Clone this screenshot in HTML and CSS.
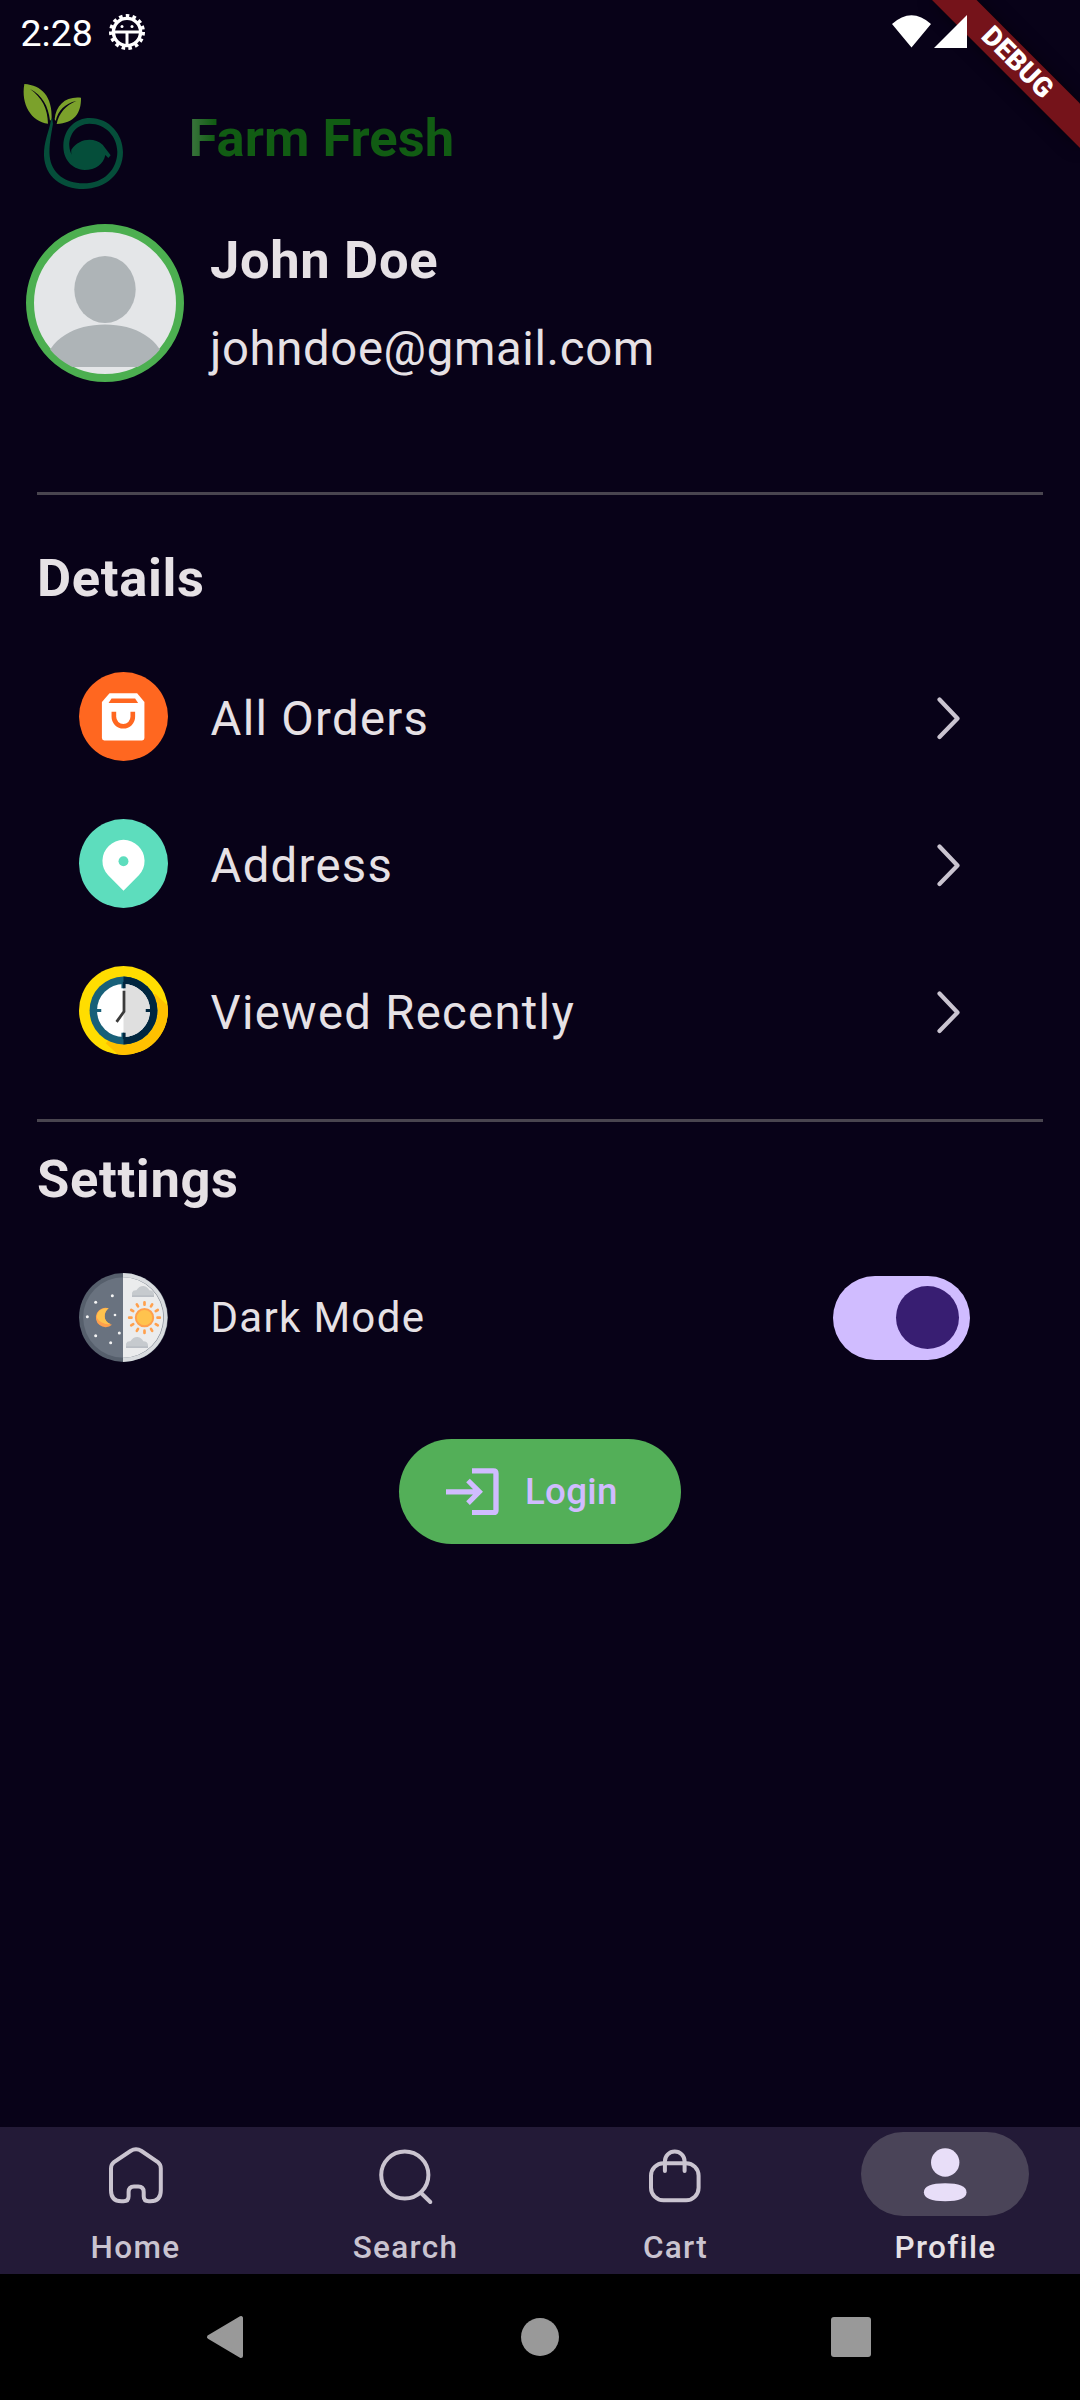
FILE: index.html
```html
<!DOCTYPE html>
<html lang="en">
<head>
<meta charset="utf-8">
<title>Farm Fresh</title>
<link rel="stylesheet" href="styles.css">
</head>
<body>
<div class="phone">
  <svg class="debug-banner" width="200" height="200" viewBox="880 0 200 200">
    <path class="banner-shadow" d="M932 0H976.6L1080 103.4V148Z"/>
    <path d="M932 0H976.6L1080 103.4V148Z" fill="#75131a"/>
    <text class="banner-text" transform="translate(1017.5 62.2) rotate(45)" text-anchor="middle" y="9">DEBUG</text>
  </svg>
  <header class="status-bar">
    <span class="clock">2:28</span>
    <svg class="bug" width="38" height="38" viewBox="-19 -19 38 38">
      <circle r="13.6" fill="none" stroke="#fff" stroke-width="3.4"/>
      <circle r="16" fill="none" stroke="#fff" stroke-width="4" stroke-dasharray="3.5 3.2"/>
      <path d="M-12 0H12M0 0V13" stroke="#fff" stroke-width="3"/>
      <circle cx="-5" cy="-5.5" r="1.5" fill="#fff"/><circle cx="5" cy="-5.5" r="1.5" fill="#fff"/>
    </svg>
    <svg class="signals" width="76" height="34" viewBox="892 14 76 34">
      <path fill="#fff" d="M892 23Q911.500 5.500 931 23L911.500 46.500ZM967 14V47H934Z"/>
    </svg>
  </header>

  <div class="app-bar">
    <svg class="logo" width="106.67" height="113.33" viewBox="60 240 320 340">
      <path fill="#7ba12b" d="M73 252C125 255 158 290 155 358L150 362C145 318 127 286 90 267C126 293 143 325 144 371C94 366 62 312 73 252Z"/>
      <path fill="#7ba12b" d="M243 293C244 340 222 369 170 372C176 341 198 315 229 303C195 310 174 332 167 363L164 358C168 314 198 288 243 293Z"/>
      <path fill="#054e3a" d="M156 352L159 372C152 410 147 438 149 468C154 520 196 550 250 550C313 550 352 507 352 455C351 410 318 371 268 371C230 372 207 402 208 438C209 456 218 473 231 487C218 476 212 464 214 449C238 414 282 411 308 434L332 466L325 474L316 465C311 493 286 510 254 510C213 508 189 476 190 436C192 386 226 354 270 354C328 354 369 403 369 457C369 521 317 567 250 567C185 567 134 529 132 467C131 425 146 397 152 365Z"/>
    </svg>
    <h1 class="brand">Farm Fresh</h1>
  </div>

  <main class="content">
    <section class="user">
      <svg class="avatar" width="158" height="158" viewBox="-79 -79 158 158">
        <defs><clipPath id="face"><circle r="72"/></clipPath></defs>
        <circle r="75" fill="#e4e6e8" stroke="#4caf50" stroke-width="8"/>
        <g clip-path="url(#face)" fill="#aeb4b7">
          <ellipse cx="0" cy="-13.500" rx="30.700" ry="33.500"/>
          <path d="M-62 64C-56 35 -30 21.500 0 21.500S56 35 62 64Z"/>
        </g>
      </svg>
      <div class="user-text">
        <p class="user-name">John Doe</p>
        <p class="user-mail">johndoe@gmail.com</p>
      </div>
    </section>

    <hr class="divider">

    <section class="details">
      <h2 class="heading">Details</h2>
      <div class="row">
        <svg class="row-icon" viewBox="237 605 268 268">
          <circle cx="371" cy="739" r="134" fill="#ff6720"/>
          <path fill="#fff" d="M329 669H412L434 695V804Q434 811 427 811H313Q306 811 306 804V695Z"/>
          <path fill="#ff6720" d="M335 685H406L415 698H326Z"/>
          <path d="M342 725V740A28 28 0 0 0 399 740V725" fill="none" stroke="#ff6720" stroke-width="14"/>
        </svg>
        <span class="row-label">All Orders</span>
        <svg class="chevron" width="24" height="43" viewBox="0 0 24 43"><path d="M2.500 2.500L20.500 21.500L2.500 40"/></svg>
      </div>
      <div class="row">
        <svg class="row-icon" viewBox="-45 -45 90 90">
          <circle r="45" fill="#5dddbd"/>
          <path fill="#fff" d="M0 27.500L-15.500 12A21.300 21.300 0 1 1 15.500 12Z"/>
          <circle cy="-2.300" r="5" fill="#5dddbd"/>
        </svg>
        <span class="row-label">Address</span>
        <svg class="chevron" width="24" height="43" viewBox="0 0 24 43"><path d="M2.500 2.500L20.500 21.500L2.500 40"/></svg>
      </div>
      <div class="row">
        <svg class="row-icon" viewBox="-45 -45 90 90">
          <defs><clipPath id="disc"><circle r="45"/></clipPath></defs>
          <circle r="45" fill="#ffdd00"/>
          <path clip-path="url(#disc)" fill="#ffc000" d="M32 -17L46 -4V46H-4L-18 33Z"/>
          <circle r="34.300" fill="#186079"/>
          <path d="M0 -34.300A34.300 34.300 0 0 1 0 34.300Z" fill="#00263f"/>
          <circle r="26.800" fill="#fff"/>
          <path d="M0 -26.800A26.800 26.800 0 0 1 0 26.800Z" fill="#dfdfdf"/>
          <path d="M-27.500 0H-22.500M-.7 -29V-22.500M-.7 22.500V29" stroke="#186079" stroke-width="2.800"/>
          <path d="M22.500 0H27.500M.7 -29V-22.500M.7 22.500V29" stroke="#00263f" stroke-width="2.800"/>
          <path d="M.5 -20V1L-7 11.500" fill="none" stroke="#3b3b3b" stroke-width="2.800"/>
        </svg>
        <span class="row-label">Viewed Recently</span>
        <svg class="chevron" width="24" height="43" viewBox="0 0 24 43"><path d="M2.500 2.500L20.500 21.500L2.500 40"/></svg>
      </div>
    </section>

    <hr class="divider">

    <section class="settings">
      <h2 class="heading">Settings</h2>
      <div class="row">
        <svg class="row-icon" viewBox="177 519 267 267">
          <circle cx="310.500" cy="652.500" r="133.500" fill="#565f6c"/>
          <path d="M309 519A133.500 133.500 0 0 1 309 786Z" fill="#d9dcdf"/>
          <circle cx="310.500" cy="652.500" r="121" fill="#69727f"/>
          <path d="M309 531.500A121 121 0 0 1 309 773.500Z" fill="#ebeced"/>
          <path d="M266 625A29 29 0 1 0 276 674C249 670 249 637 266 625Z" fill="#ffa04d"/>
          <path d="M266 625C240 623 229 638 231 654C240 668 254 674 272 672C249 665 249 637 266 625Z" fill="#ffc34e"/>
          <g fill="#f5f5f5"><circle cx="277" cy="587" r="4.500"/><circle cx="227" cy="607" r="4.500"/><circle cx="202" cy="650" r="4.500"/><circle cx="285" cy="645" r="4"/><circle cx="298" cy="699" r="4.500"/><circle cx="227" cy="707" r="4.500"/><circle cx="272" cy="728" r="4.500"/></g>
          <g fill="#c6cace"><path d="M336 590V578Q339 570 349 571Q358 557 371 558Q383 560 388 571Q401 572 402 582V590Z"/><path d="M318 743V731Q321 723 331 724Q340 710 353 711Q365 713 370 724Q383 725 384 735V743Z"/></g>
          <path d="M336 588.500H402M318 741.500H384" stroke="#b2b7be" stroke-width="4"/>
          <g transform="translate(373.500 653)">
            <circle r="26" fill="#ffc34e" stroke="#ffa04d" stroke-width="6"/>
            <g stroke="#ffa04d" stroke-width="8" stroke-linecap="round">
              <path d="M0 -46V-39M0 39V46M-46 0H-39M39 0H46"/>
              <path transform="rotate(30)" d="M0 -46V-39M0 39V46M-46 0H-39M39 0H46"/>
              <path transform="rotate(60)" d="M0 -46V-39M0 39V46M-46 0H-39M39 0H46"/>
            </g>
          </g>
        </svg>
        <span class="row-label small">Dark Mode</span>
        <span class="switch"><span class="thumb"></span></span>
      </div>
      <button class="login">
        <svg width="52.67" height="47.33" viewBox="199 143 158 142">
          <path d="M277 151.500H341Q349 151.500 349 159.500V269Q349 277 341 277H277" fill="none" stroke="#d0bcff" stroke-width="16"/>
          <path d="M199 214.500H297M265 180.500L299 214.500L265 248.500" fill="none" stroke="#d0bcff" stroke-width="15.500"/>
        </svg>
        <span class="login-label">Login</span>
      </button>
    </section>
  </main>

  <nav class="tabs">
    <div class="tab">
      <span class="pill"><svg class="tab-icon" viewBox="0 0 63 63"><path d="M24.600 52.500V49Q24.600 43.500 30 43.500H34.300Q39.700 43.500 39.700 49V53.200Q39.700 58.200 44.700 58.200H46.500Q56.800 58.200 56.800 47.500V25.500Q56.800 21.500 53.800 19L37.500 8Q32 4.400 26.500 8L10 19Q7 21.500 7 25.500V47.500Q7 58.200 17.300 58.200H19.600Q24.600 58.200 24.600 53.200Z"/></svg></span>
      <span class="tab-label">Home</span>
    </div>
    <div class="tab">
      <span class="pill"><svg class="tab-icon" viewBox="0 0 63 63"><circle cx="30.800" cy="32" r="23.600"/><path d="M47.300 50.200L56.300 59"/></svg></span>
      <span class="tab-label">Search</span>
    </div>
    <div class="tab">
      <span class="pill"><svg class="tab-icon" viewBox="0 0 63 63"><rect x="7" y="20.200" width="47.600" height="37.100" rx="12.500"/><path d="M20.900 28V18.300A9.850 9.850 0 0 1 40.600 18.300V28"/></svg></span>
      <span class="tab-label">Cart</span>
    </div>
    <div class="tab active">
      <span class="pill"><svg class="tab-icon" viewBox="0 0 63 63"><circle cx="31.200" cy="19.500" r="14.200"/><path d="M31.200 40.300C45 40.300 52.500 43 52.500 49.300S45 58.300 31.200 58.300S9.900 55.500 9.900 49.300S17 40.300 31.200 40.300Z"/></svg></span>
      <span class="tab-label">Profile</span>
    </div>
  </nav>

  <footer class="system-nav">
    <svg width="38" height="44" viewBox="0 0 38 44"><path d="M3 22L35 3V41Z" fill="#999" stroke="#999" stroke-width="4" stroke-linejoin="round"/></svg>
    <span class="sys-home"></span>
    <span class="sys-recent"></span>
  </footer>
</div>
</body>
</html>
```
FILE: styles.css
```css
* { box-sizing: border-box; }
body {
  margin: 0;
  background: #080218;
  color: #e6e1e5;
  font-family: Roboto, "Liberation Sans", sans-serif;
}
h1, h2, p { margin: 0; }
svg { display: block; flex: none; }

.phone {
  position: relative;
  display: flex;
  flex-direction: column;
  width: 1080px;
  height: 2400px;
  overflow: hidden;
}

.debug-banner { position: absolute; top: 0; right: 0; }
.banner-shadow { filter: drop-shadow(0 0 8px rgba(0, 0, 0, .5)); }
.banner-text { font-size: 27.500px; font-weight: 900; fill: #fff; }

.status-bar {
  position: relative;
  display: flex;
  align-items: center;
  height: 63px;
  padding: 0 112px 0 20.500px;
}
.clock { padding-top: 3px; font-size: 37.500px; line-height: 60px; color: #fff; }
.bug { margin-left: 15px; }
.signals { margin-left: auto; }

.app-bar {
  display: flex;
  align-items: center;
  height: 147px;
  padding-left: 20px;
}
.brand {
  margin-left: 62px;
  padding-top: 3px;
  font-size: 52.500px;
  font-weight: 700;
  line-height: 63px;
  color: transparent;
  background: linear-gradient(90deg, #3d7640 0, #115c13 26px);
  -webkit-background-clip: text;
  background-clip: text;
}

.user {
  display: flex;
  gap: 26px;
  height: 172px;
  padding: 14px 0 0 26px;
}
.user-text { padding-top: 5px; }
.user-name { font-size: 52.500px; font-weight: 700; line-height: 62px; letter-spacing: .656px; }
.user-mail { margin-top: 29px; font-size: 47.250px; line-height: 58px; letter-spacing: .656px; }

.divider {
  width: 1006px;
  height: 3px;
  margin: 0 auto;
  border: 0;
  background: #49454f;
}
.user + .divider { margin-top: 110px; }

.heading { padding-left: 37px; font-size: 52.500px; font-weight: 700; line-height: 62px; letter-spacing: .656px; }
.details { height: 624px; padding-top: 52px; }
.details .heading { margin-bottom: 34px; }
.settings .heading { padding-top: 26px; margin-bottom: 34px; }

.row {
  display: flex;
  align-items: center;
  height: 147px;
  padding: 0 110px 0 79px;
}
.row-icon { width: 89px; height: 89px; margin-right: 42.500px; }
.row-label { padding-top: 4px; font-size: 47.250px; letter-spacing: 1.310px; }
.row-label.small { padding-top: 0; font-size: 42px; }
.chevron { margin: 4px 9px 0 auto; }
.chevron path { fill: none; stroke: #cac4d0; stroke-width: 4.200; stroke-linecap: round; stroke-linejoin: round; }

.switch {
  display: flex;
  align-items: center;
  justify-content: flex-end;
  width: 137px;
  height: 84px;
  margin-left: auto;
  padding-right: 11px;
  border-radius: 42px;
  background: #d0bcff;
}
.thumb { width: 63px; height: 63px; border-radius: 50%; background: #381e72; }

.login {
  display: flex;
  align-items: center;
  gap: 26px;
  width: 282px;
  height: 105px;
  margin: 48px auto 0;
  padding: 0 0 0 47.300px;
  border: 0;
  border-radius: 53px;
  background: #53af58;
  color: #d0bcff;
  font-family: inherit;
}
.login-label { font-size: 36.750px; font-weight: 500; letter-spacing: .26px; }

.tabs {
  display: grid;
  grid-template-columns: repeat(4, 1fr);
  height: 147px;
  margin-top: auto;
  background: #231a37;
}
.tab { display: flex; flex-direction: column; align-items: center; padding-top: 5px; color: #cac4d0; }
.pill { display: grid; place-items: center; width: 168px; height: 84px; border-radius: 42px; }
.tab-icon { width: 63px; height: 63px; fill: none; stroke: currentColor; stroke-width: 4; stroke-linecap: round; }
.tab-label { margin-top: 11px; padding-left: 1px; font-size: 31.500px; font-weight: 500; line-height: 42px; letter-spacing: 1.310px; }
.active { color: #e6e1e5; }
.active .pill { background: #4a4458; }
.active .tab-icon { fill: #e8def8; stroke: none; }

.system-nav {
  display: grid;
  grid-template-columns: 450px 180px 442px;
  place-items: center;
  height: 126px;
  background: #000;
}
.sys-home { width: 38px; height: 38px; border-radius: 50%; background: #999; }
.sys-recent { width: 40px; height: 40px; border-radius: 3px; background: #999; }
```
